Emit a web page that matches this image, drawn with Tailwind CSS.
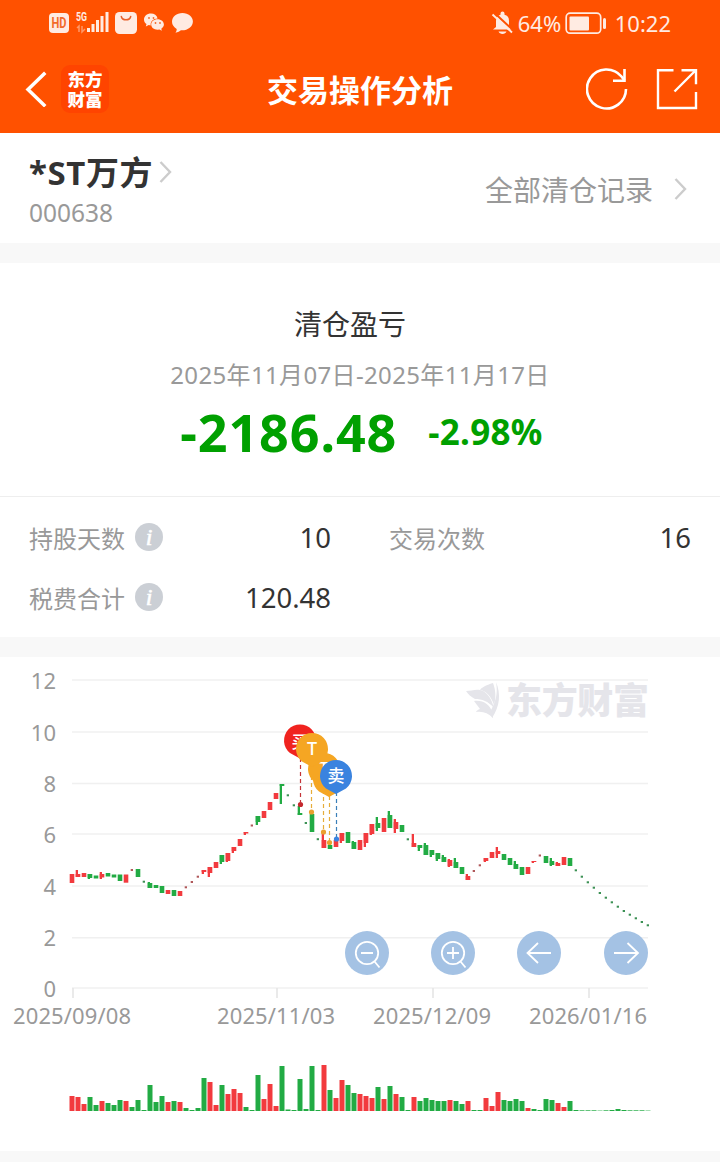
<!DOCTYPE html>
<html lang="zh-CN">
<head>
    <meta charset="UTF-8">
    <meta name="viewport" content="width=device-width, initial-scale=1.0">
    <title>交易操作分析</title>
    <script src="https://cdn.jsdelivr.net/npm/@tailwindcss/browser@4"></script>
</head>
<body class="w-[720px] bg-white font-['Noto_Sans','Noto_Sans_CJK_SC',sans-serif] text-[#333]">

    <header class="h-[133px] bg-[#ff5100] text-white">
        <!-- Barra de status -->
        <div class="flex h-[46px] items-center justify-between pl-[49px] pr-[49px] text-[#ffebe2]">
            <svg class="h-[46px] w-[150px]" viewBox="49 0 150 46" fill="currentColor">
                <rect x="49" y="13" width="20" height="20" rx="4"/>
                <text x="59" y="28" text-anchor="middle" font-size="14" font-weight="700" textLength="15" lengthAdjust="spacingAndGlyphs" fill="#f26a2a" font-family="Roboto, sans-serif">HD</text>
                <text x="76" y="21" font-size="12" font-weight="700" textLength="11" lengthAdjust="spacingAndGlyphs" font-family="Roboto, sans-serif">5G</text>
                <path d="M79 32v-6l-2 2M82 26v6l3-3" fill="none" stroke="#ff9868" stroke-width="1.5"/>
                <path d="M87 28h3v4h-3zM91.500 24h3v8h-3zM96 20h3v12h-3zM100.500 16h3v16h-3zM105.500 12h3v20h-3z"/>
                <rect x="115" y="12" width="22" height="22" rx="4.500"/>
                <path d="M121.300 16.500a4.800 4.200 0 0 0 9.400 0" fill="none" stroke="#e8602a" stroke-width="1.500" stroke-linecap="round"/>
                <path d="M151 13.500c-4.200 0-7 2.700-7 6 0 2 1 3.500 2.500 4.600l-.7 2.400 2.900-1.400 2 .3c-.6-4 2.600-7 6.900-7-.7-3-3.300-4.900-6.600-4.900z"/>
                <path d="M157.500 19.300c-3.700 0-6.300 2.400-6.300 5.300s2.700 5.200 6.300 5.200l2-.2 2.300 1.200-.5-2c1.600-1 2.600-2.500 2.600-4.200 0-2.900-2.700-5.300-6.400-5.300z"/>
                <g fill="#f26a2a"><circle cx="149" cy="18" r=".9"/><circle cx="153.500" cy="18" r=".9"/><circle cx="155.500" cy="23" r=".9"/><circle cx="160" cy="23" r=".9"/></g>
                <path d="M182.500 13c-6 0-10.500 3.900-10.500 8.700 0 3 1.900 5.600 4.700 7.200 0 1.500-.4 2.800-1.300 3.800 2.500-.3 4.300-1.300 5.500-2.400 6.600.5 12-3.700 12-8.800 0-4.700-4.600-8.500-10.400-8.500z"/>
            </svg>
            <div class="flex h-[46px] items-center leading-[46px]">
                <svg class="h-[24px] w-[22px]" viewBox="489 11 22 24" fill="currentColor">
                    <path d="M491 29.500l3-2.500v-6c0-3.500 2-5.500 4.500-6.200v-1.300a2 2 0 0 1 4 0v1.300c3 .7 4.500 2.700 4.500 6.200v6l3 2.500z"/>
                    <path d="M496.500 31.500h8c-1 3.300-7 3.300-8 0z"/>
                    <path d="M492 12.500l20 18.500" stroke="#ff5100" stroke-width="2"/>
                    <path d="M490.500 14.500l19.500 18" stroke="currentColor" stroke-width="1.900"/>
                </svg>
                <span class="ml-[5px] w-[47px] text-[22px]">64%</span>
                <svg class="h-[24px] w-[42px]" viewBox="564 11 42 24" fill="currentColor">
                    <rect x="565.200" y="13.200" width="34.500" height="20" rx="4" fill="none" stroke="currentColor" stroke-width="1.700"/>
                    <rect x="568.500" y="16.500" width="19.500" height="14" rx="1"/>
                    <rect x="602" y="18" width="3" height="11" rx="1.500"/>
                </svg>
                <span class="ml-[8px] text-[22px]">10:22</span>
            </div>
        </div>
        <!-- Barra de navegação -->
        <div class="grid h-[87px] grid-cols-[1fr_auto_1fr] items-center px-[22px] pb-[2px]">
            <div class="flex items-center">
                <svg class="h-[36px] w-[26px]" viewBox="22 71 26 36" fill="none" stroke="white" stroke-width="3.500" stroke-linecap="square">
                    <path d="M44 74L28 89.500 44 105"/>
                </svg>
                <div class="ml-[13px] flex h-[48px] w-[48px] flex-col items-center rounded-[9px] bg-[#ff4400] pt-[4px] font-['Noto_Sans_CJK_SC',sans-serif] text-[17.5px] font-black leading-[20px]">
                    <span>东方</span>
                    <span>财富</span>
                </div>
            </div>
            <h1 class="pt-[4px] text-[31px] font-bold leading-[81px]">交易操作分析</h1>
            <div class="flex justify-end gap-[28px]">
                <svg class="h-[42px] w-[42px]" viewBox="586 68 42 42" fill="none" stroke="white" stroke-width="2.600">
                    <path d="M626 89a19.500 19.500 0 1 1-4.500-12.500l3 4"/>
                    <path d="M624.500 69v11.800H613"/>
                </svg>
                <svg class="h-[42px] w-[42px]" viewBox="656 68 42 42" fill="none" stroke="white" stroke-width="2.400">
                    <path d="M673.500 70.200H658V108h38V92M681.500 70.200H696v14M695.500 70.500L674.500 91.500"/>
                </svg>
            </div>
        </div>
    </header>

    <section class="flex h-[110px] justify-between pl-[29px] pr-[33px]">
        <div>
            <div class="flex h-[42px] items-center pt-[36px]">
                <span class="pt-[2px] text-[33px] font-bold leading-[42px] tracking-[0.6px]">*ST万方</span>
                <svg class="ml-[6px] h-[24px] w-[13px]" viewBox="0 0 13 24" fill="none" stroke="#ccc" stroke-width="2.400"><path d="M1.500 2l9.500 10L1.500 22"/></svg>
            </div>
            <div class="mt-[21px] text-[24.5px] leading-[34px] text-[#999]">000638</div>
        </div>
        <div class="flex items-center pt-[2px] text-[#999]">
            <span class="pt-[2px] text-[28px] leading-[40px]">全部清仓记录</span>
            <svg class="ml-[21px] h-[24px] w-[13px]" viewBox="0 0 13 24" fill="none" stroke="#ccc" stroke-width="2.400"><path d="M1.500 2l9.500 10L1.500 22"/></svg>
        </div>
    </section>

    <div class="h-[20px] bg-[#f8f8f8]"></div>

    <section class="flex h-[234px] flex-col items-center border-b border-[#eee] pt-[40px]">
        <h2 class="pr-[20px] text-[28px] leading-[42px]">清仓盈亏</h2>
        <p class="mt-[12px] text-[24px] leading-[36px] tracking-[0.35px] text-[#999]">2025年11月07日-2025年11月17日</p>
        <div class="mt-[4px] flex items-center gap-[31px] pl-[3px] font-bold text-[#00a000]">
            <span class="text-[52px] leading-[70px] tracking-[0.9px]">-2186.48</span>
            <span class="text-[35px] leading-[70px] tracking-[0.3px]">-2.98%</span>
        </div>
    </section>

    <section class="grid h-[140px] grid-cols-2 content-start gap-x-[58px] pl-[29px] pr-[29px] pt-[11px] text-[24px] leading-[60px] text-[#999]">
        <div class="flex h-[60px] items-center">
            <span class="pt-[2px]">持股天数</span>
            <svg class="mb-[2px] ml-[10px] h-[28px] w-[28px]" viewBox="0 0 28 28"><circle cx="14" cy="14" r="14" fill="#cbcfd5"/><text x="14" y="22" text-anchor="middle" fill="white" stroke="white" stroke-width=".6" font-family="Liberation Serif, serif" font-size="24" font-style="italic">i</text></svg>
            <span class="ml-auto text-[27.5px] text-[#333]">10</span>
        </div>
        <div class="flex h-[60px] items-center justify-between">
            <span class="pt-[2px]">交易次数</span>
            <span class="text-[27.5px] text-[#333]">16</span>
        </div>
        <div class="flex h-[60px] items-center">
            <span class="pt-[2px]">税费合计</span>
            <svg class="mb-[2px] ml-[10px] h-[28px] w-[28px]" viewBox="0 0 28 28"><circle cx="14" cy="14" r="14" fill="#cbcfd5"/><text x="14" y="22" text-anchor="middle" fill="white" stroke="white" stroke-width=".6" font-family="Liberation Serif, serif" font-size="24" font-style="italic">i</text></svg>
            <span class="ml-auto text-[27.5px] text-[#333]">120.48</span>
        </div>
    </section>

    <div class="h-[20px] bg-[#f8f8f8]"></div>

    <section class="h-[494px]">
        <svg class="block h-[494px] w-[720px]" viewBox="0 657 720 494">
            <!-- Grade e eixos -->
            <g id="grade" stroke="#f0f0f0" stroke-width="1.500"></g>
            <path d="M73 988v10M277 988v10M433 988v10M589 988v10" stroke="#e3e3e3" stroke-width="1.500"/>
            <g id="eixoY" fill="#999" font-size="22" text-anchor="end"></g>
            <g fill="#999" font-size="22" text-anchor="middle">
                <text x="72" y="1024" textLength="118">2025/09/08</text>
                <text x="276" y="1024" textLength="118">2025/11/03</text>
                <text x="432" y="1024" textLength="118">2025/12/09</text>
                <text x="588" y="1024" textLength="118">2026/01/16</text>
            </g>
            <!-- Marca d'água -->
            <g fill="#e5e5ea">
                <path d="M466 691c5 0 9-2 14-1 5 1 9 5 12 12l2 6c-6-7-12-9-19-9-4-2-7-5-9-8z"/>
                <path d="M474 701c9-1 16 3 19 13v4c-5-5-10-7-17-6 1-2 2-2 4-3-2-3-4-5-6-8z"/>
                <path d="M493 683c-7 2-12 5-13 7 6 1 11 6 14 15 2-7 2-14-1-22z"/>
                <path d="M496 682c5 12 4 24-4 36l-1-8c5-9 7-17 5-28z"/>
                <text x="506" y="714" font-size="36" font-weight="900" textLength="143">东方财富</text>
            </g>
            <g id="velas"></g>
            <g id="volume"></g>
            <!-- Marcadores de compra e venda -->
            <g fill="none" stroke-width="1.200" stroke-dasharray="4 3">
                <path d="M300.500 758v44" stroke="#c43338"/>
                <path d="M311.500 776v34M323.500 790v40M329.500 796v44" stroke="#e6ad3a"/>
                <path d="M336.500 792v45" stroke="#3a7fb8"/>
            </g>
            <circle cx="300.500" cy="804.500" r="2.600" fill="#c4282e"/>
            <circle cx="311.500" cy="812" r="2.600" fill="#eaa02e"/>
            <circle cx="323.500" cy="832" r="2.600" fill="#eaa02e"/>
            <circle cx="329.500" cy="842.500" r="2.600" fill="#eaa02e"/>
            <circle cx="336.500" cy="839" r="2.600" fill="#3a83df"/>
            <g font-size="17" font-weight="500" text-anchor="middle">
                <path d="M300 758.500l-10-5.500a16 16 0 1 1 20 0z" fill="#f0231f"/>
                <text x="300" y="748" fill="white">买</text>
                <path d="M329 797l-10-5.500a16 16 0 1 1 20 0z" fill="#f5a623"/>
                <path d="M324 787l-10-5.500a16 16 0 1 1 20 0z" fill="#f5a623"/>
                <text x="324" y="774" fill="white">T</text>
                <path d="M312 767l-10-5.500a16 16 0 1 1 20 0z" fill="#f5a623"/>
                <text x="312" y="754.500" font-size="18" fill="white">T</text>
                <path d="M336 794l-10-5.500a16 16 0 1 1 20 0z" fill="#3a83df"/>
                <text x="336" y="782" fill="white">卖</text>
            </g>
            <!-- Botões de zoom e navegação -->
            <g fill="#a4c2e4">
                <circle cx="367" cy="953" r="22"/>
                <circle cx="453" cy="953" r="22"/>
                <circle cx="539" cy="953" r="22"/>
                <circle cx="626" cy="953" r="22"/>
            </g>
            <g fill="none" stroke="white" stroke-width="1.800">
                <circle cx="367" cy="953" r="11.200"/>
                <path d="M361 953h12M374.500 961.500l5 6"/>
                <circle cx="453" cy="953" r="11.200"/>
                <path d="M447 953h12M453 947v12M460.500 961.500l5 6"/>
                <path d="M551 953h-23M538 943l-10.500 10 10.500 10"/>
                <path d="M614 953h23M627.500 943l10.500 10-10.500 10"/>
            </g>
        </svg>
    </section>

    <div class="h-[11px] bg-[#f8f8f8]"></div>

    <script>
        const NS = 'http://www.w3.org/2000/svg';
        const VERMELHO = '#f23a3e';
        const VERDE = '#22ab44';

        // [cor, topo do corpo, base do corpo, topo do pavio, base do pavio]
        const velas = [
            ['r',874,883],['r',874,877,870,877],['r',873,877],['g',874,878,874,879],['g',875.500,878.500],
            ['r',874,877.500,872,879],['g',873,876.500],['g',874.500,877.500],['g',874.500,881],['r',874.500,882.700],
            ['d',870],['g',869,877],['d',881.700],['g',883,888,882,888],['g',885,888],
            ['g',886,893],['r',890,894],['g',890,896],['r',891,896],['d',887.300],
            ['d',882],['d',876.700],['r',870,872,870,874],['r',867,873,867,877],['r',862,868],
            ['g',855,862,855,864],['r',853,861,853,862],['r',847,851,847,853],['r',839,846],['r',832,833.500,832,835],
            ['d',825.500],['g',816,822,816,825],['r',811,818],['r',802,810],['r',793,799],
            ['g',784,786,784,804],['d',795.300],['d',805.300],['g',813,815,806,815],['d',823],
            ['g',814,832],['d',839.200],['r',840,848,833,848],['g',845,849],['r',840,847],
            ['r',833,841,833,843],['g',832,843],['g',842,849,841,849],['r',840,850],['r',833,843,833,847],
            ['r',824,834,824,835],['g',823,828,817,831],['r',818,832],['g',815,828,811,828],['r',822,829,819,833],
            ['g',825,832],['d',839.300],['r',843,847,834,847],['g',845,848,845,851],['g',845,855,843,855],
            ['g',850,855,850,857],['g',853,859,853,861],['g',857,862,855,862],['r',860,866,859,867],['g',862,868,858,868],
            ['g',867,874],['r',876,880,874,880],['d',871],['d',865.300],['r',858,861,858,862],
            ['r',852,858],['r',851,854,847,858],['g',854,860],['g',858,865],['g',864,869,861,869],
            ['g',867,875],['r',867,874],['r',861,862,861,863],['d',855.500],['g',856,863],
            ['g',861,865,858,866],['r',863,866,862,866],['r',857,865],['g',858,866],['d',870.300],
            ['d',876.700],['d',882.300],['d',887.700],['d',893],['d',897.700],['d',902.300],
            ['d',906.700],['d',911],['d',914.700],['d',918.300],['d',922],['d',925.300]
        ];
        // Pontos de alta (preço travado no limite)
        const pontosAlta = [10, 19, 20, 21, 30, 67, 68, 78];

        // Altura de cada barra de volume, em pixels
        const volume = 'r15 r14 r7 g14 g6 r10 g8 g6 g11 r10 g4 g11 g1 g26 g9 g15 r9 g10 r9 g3 g1 g3 g33 r29 r6 g26 r17 r22 r18 g4 g1 g36 r12 r27 r5 g45 g1.5 g1 g32 g2 g45 g1 r46 g21 r13 r31 g26 g18 r17 r15 r13 g24 r12 g25 r17 g14 g1 r14 g10 g13 g11 g10 g10 r11 g10 g7 r10 g1 g1 r13 r5 r19 g11 g10 g12 g10 r3 g2 g1 g12 g11 r8 r4 g10 g1 g.7 g.7 g.7 g.4 g.7 g1 g2 g1 g.7 g.7 g.7 g.4'.split(' ');

        function cria(tag, attrs, pai) {
            const el = document.createElementNS(NS, tag);
            for (const nome in attrs) el.setAttribute(nome, attrs[nome]);
            document.getElementById(pai).appendChild(el);
            return el;
        }

        [680, 732, 783.500, 834, 886, 937.800, 988].forEach((y, i) => {
            cria('path', { d: `M72 ${y}H648` }, 'grade');
            cria('text', { x: 56, y: y + 8.500 }, 'eixoY').textContent = 12 - i * 2;
        });

        velas.forEach(([cor, topo, base, pavioTopo, pavioBase], i) => {
            const x = 69.700 + i * 6;
            if (cor === 'd') {
                const fill = pontosAlta.includes(i) ? '#b0585a' : '#3c9155';
                cria('rect', { x: x + 1, y: topo - 1, width: 2.300, height: 2, fill }, 'velas');
                return;
            }
            const fill = cor === 'r' ? VERMELHO : VERDE;
            cria('rect', { x, y: topo, width: 4.600, height: base - topo, fill }, 'velas');
            if (pavioTopo) {
                cria('rect', { x, y: pavioTopo, width: 2.300, height: pavioBase - pavioTopo, fill }, 'velas');
            }
        });

        volume.forEach((v, i) => {
            const altura = parseFloat(v.slice(1));
            const fill = v[0] === 'r' ? VERMELHO : VERDE;
            cria('rect', { x: 69.500 + i * 6, y: 1111 - altura, width: 5, height: altura, fill }, 'volume');
        });
    </script>
</body>
</html>
